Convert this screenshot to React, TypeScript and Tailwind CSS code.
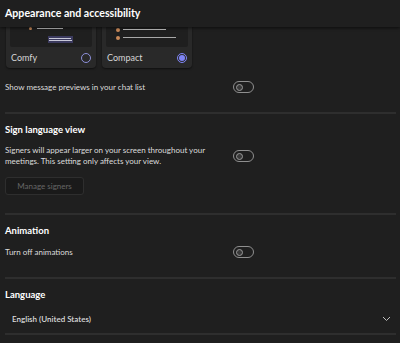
import React from "react";

const Toggle = () => (
  <div className="w-[21px] h-[12px] shrink-0 rounded-full border border-[#8f8f8f] flex items-center px-[1.5px]">
    <div className="w-[7px] h-[7px] rounded-full border border-[#9a9a9a] bg-[#3a3a3a]" />
  </div>
);

const Divider = () => <div className="h-[2px] bg-[#2e2e2e] ml-[5px] mr-[4px]" />;

const Card = ({ label, selected, children }: { label: string; selected?: boolean; children: React.ReactNode }) => (
  <div className="w-[90px] h-[72px] rounded-[4px] bg-[#292929] shadow-[0_1px_2px_rgba(0,0,0,0.5)] flex flex-col px-[4px]">
    <div className="h-[47px] mt-[4px] bg-[#1f1f1f] rounded-[2px] relative">{children}</div>
    <div className="flex items-center justify-between flex-1 pl-[1px] pr-[1px]">
      <span className="text-[9px] text-[#d6d6d6]">{label}</span>
      {selected ? (
        <div className="w-[10px] h-[10px] rounded-full border border-[#7f85f5] flex items-center justify-center">
          <div className="w-[6px] h-[6px] rounded-full bg-[#7f85f5]" />
        </div>
      ) : (
        <div className="w-[10px] h-[10px] rounded-full border border-[#8c8fd9]" />
      )}
    </div>
  </div>
);

export default function App() {
  return (
    <div className="w-[400px] h-[343px] bg-[#1f1f1f] overflow-hidden flex flex-col text-[#dcdcdc]" style={{ fontFamily: 'Lato, "Noto Sans", sans-serif' }}>
      {/* HEADER */}
      <div className="h-[27px] shrink-0 flex items-center px-[5px] bg-[#1f1f1f] shadow-[0_1px_3px_rgba(0,0,0,0.6)] z-10">
        <span className="text-[10.6px] font-bold text-white">Appearance and accessibility</span>
      </div>
      <div className="flex-1 overflow-hidden">
        <div className="-mt-[31px]">
          {/* CARDS */}
          <div className="flex gap-[6px] pl-[6px]">
            <Card label="Comfy">
              <div className="absolute left-[19px] top-[27px] w-[3px] h-[3px] rounded-full bg-[#c98a5a]" />
              <div className="absolute left-[27px] top-[28px] w-[26px] h-[1px] bg-[#bdbdbd]" />
              <div className="absolute left-[38px] top-[36px] w-[25px] h-[7px] bg-[#3b3a5e] flex flex-col justify-center gap-[1px] px-[1px]">
                <div className="h-[1px] w-[22px] bg-[#c8c8d8]" />
                <div className="h-[1px] w-[23px] bg-[#c8c8d8]" />
              </div>
            </Card>
            <Card label="Compact" selected>
              <div className="absolute left-[10px] top-[28px] w-[4px] h-[4px] rounded-full bg-[#c98a5a]" />
              <div className="absolute left-[17px] top-[29px] w-[43px] h-[1px] bg-[#bdbdbd]" />
              <div className="absolute left-[10px] top-[36px] w-[4px] h-[4px] rounded-full bg-[#c98a5a]" />
              <div className="absolute left-[17px] top-[37px] w-[53px] h-[1px] bg-[#a8a8a8]" />
            </Card>
          </div>

          {/* PREVIEWS */}
          <div className="flex items-center justify-between pl-[5px] w-[254px] h-[12px] mt-[13px]">
            <span className="text-[8px] leading-[12px]">Show message previews in your chat list</span>
            <Toggle />
          </div>
          <div className="h-[19px]" />
          <Divider />

          {/* SIGN LANGUAGE */}
          <div className="px-[5px] pt-[9px]">
            <div className="text-[9.5px] leading-[13px] font-bold text-white">Sign language view</div>
            <div className="flex items-center justify-between w-[249px] mt-[9px]">
              <p className="text-[8px] leading-[11px] w-[205px]">
                Signers will appear larger on your screen throughout your meetings. This setting only affects your view.
              </p>
              <Toggle />
            </div>
            <div className="mt-[10px] w-[79px] h-[18px] rounded-[3px] bg-[#1a1a1a] border border-[#2e2e2e] flex items-center justify-center text-[8px] text-[#666]">
              Manage signers
            </div>
          </div>
          <div className="h-[18px]" />
          <Divider />

          {/* ANIMATION */}
          <div className="px-[5px] pt-[9px]">
            <div className="text-[9.5px] leading-[13px] font-bold text-white">Animation</div>
            <div className="flex items-center justify-between w-[249px] h-[12px] mt-[9px]">
              <span className="text-[8px] leading-[12px]">Turn off animations</span>
              <Toggle />
            </div>
          </div>
          <div className="h-[19px]" />
          <Divider />

          {/* LANGUAGE */}
          <div className="px-[5px] pt-[9px]">
            <div className="text-[9.5px] leading-[13px] font-bold text-white">Language</div>
            <div className="flex items-center justify-between h-[12px] mt-[12px] pl-[7px] pr-[4px]">
              <span className="text-[8px] leading-[12px] font-semibold">English (United States)</span>
              <svg width="9" height="6" viewBox="0 0 9 6" fill="none">
                <path d="M1 1l3.5 3.5L8 1" stroke="#bdbdbd" strokeWidth="1" />
              </svg>
            </div>
          </div>
          <div className="h-[8px]" />
          <Divider />
        </div>
      </div>
    </div>
  );
}
